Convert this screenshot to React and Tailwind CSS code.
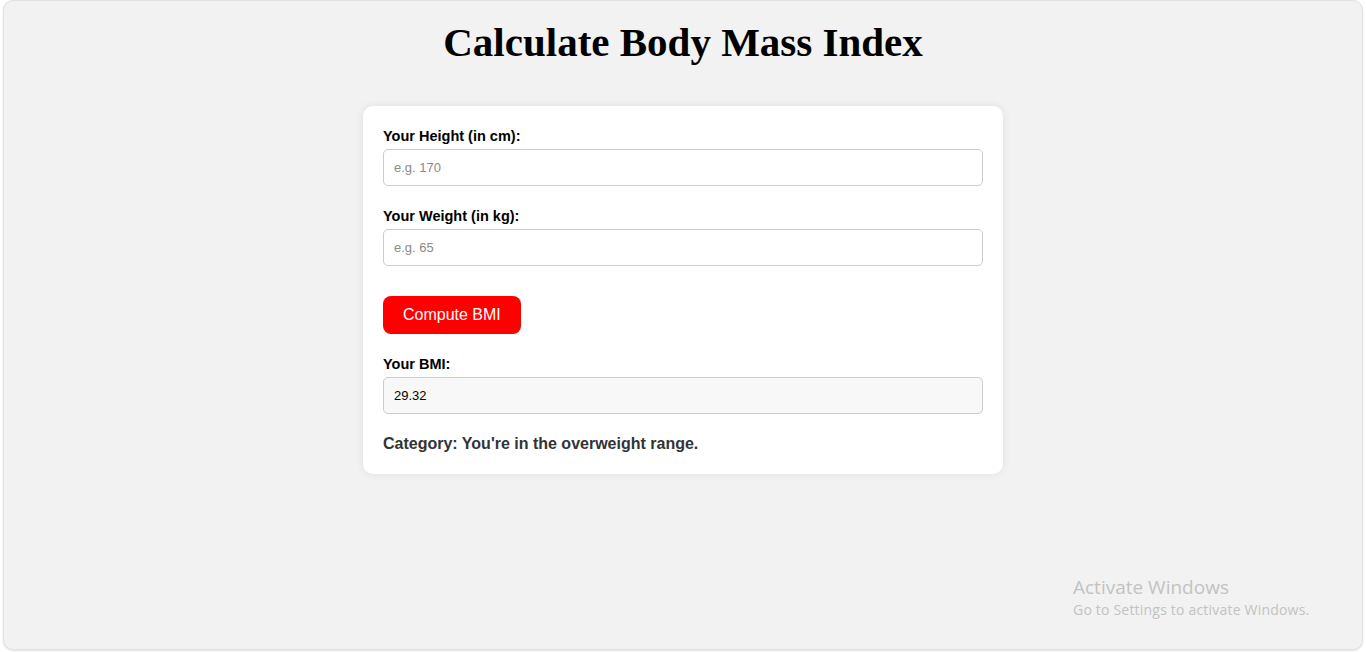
import React, { useState } from 'react';

const labelFont = { fontFamily: '"Liberation Sans", Arial, sans-serif' };

const App = () => {
  const [height, setHeight] = useState('');
  const [weight, setWeight] = useState('');
  const [bmi, setBmi] = useState('29.32');
  const [category, setCategory] = useState("You're in the overweight range.");

  const computeBmi = () => {
    const h = parseFloat(height) / 100;
    const w = parseFloat(weight);
    if (!h || !w) return;
    const value = w / (h * h);
    setBmi(value.toFixed(2));
    if (value < 18.5) setCategory("You're in the underweight range.");
    else if (value < 25) setCategory("You're in the healthy weight range.");
    else if (value < 30) setCategory("You're in the overweight range.");
    else setCategory("You're in the obese range.");
  };

  return (
    <div className="w-full h-[652px] bg-white font-['Liberation_Sans',Arial,sans-serif]">
      <div className="relative mx-[3px] h-[650px] rounded-[10px] bg-[#f2f2f2] border border-[#e2e2e2] shadow-[0_1px_2px_rgba(0,0,0,0.12)] flex flex-col items-center">
        <h1 className="mt-[16px] text-[41px] leading-[50px] font-bold text-black font-['Liberation_Serif','DejaVu_Serif',serif]">
          Calculate Body Mass Index
        </h1>

        <div className="mt-[39px] w-[640px] bg-white rounded-[10px] shadow-[0_0_10px_rgba(0,0,0,0.08)] px-5 pt-[20px] pb-[20px]">
          <label className="block text-[14.5px] leading-[21px] font-bold text-black mb-[2px]" style={labelFont}>
            Your Height (in cm):
          </label>
          <input
            type="number"
            value={height}
            onChange={(e) => setHeight(e.target.value)}
            placeholder="e.g. 170"
            className="block w-full h-[37px] px-[10px] text-[13px] border border-[#cccccc] rounded-[5px] placeholder:text-[#8a8a8a] outline-none"
          />

          <label className="block mt-[20px] text-[14.5px] leading-[21px] font-bold text-black mb-[2px]" style={labelFont}>
            Your Weight (in kg):
          </label>
          <input
            type="number"
            value={weight}
            onChange={(e) => setWeight(e.target.value)}
            placeholder="e.g. 65"
            className="block w-full h-[37px] px-[10px] text-[13px] border border-[#cccccc] rounded-[5px] placeholder:text-[#8a8a8a] outline-none"
          />

          <button
            onClick={computeBmi}
            className="mt-[30px] h-[38px] px-[20px] bg-[#ff0000] text-white text-[16px] rounded-[8px]"
          >
            Compute BMI
          </button>

          <label className="block mt-[20px] text-[14.5px] leading-[21px] font-bold text-black mb-[2px]" style={labelFont}>
            Your BMI:
          </label>
          <input
            type="text"
            readOnly
            value={bmi}
            className="block w-full h-[37px] px-[10px] text-[13px] text-black bg-[#f8f8f8] border border-[#cccccc] rounded-[5px] outline-none"
          />

          <p className="mt-[20px] text-[16px] leading-[20px] font-bold text-[#333333]">
            Category: {category}
          </p>
        </div>

        <div className="absolute left-[1069px] top-[574px] text-[#c2c2c2] font-['Open_Sans',sans-serif]">
          <div className="text-[19px] leading-[25px]">Activate Windows</div>
          <div className="text-[14px] leading-[20px] tracking-[0.2px]">Go to Settings to activate Windows.</div>
        </div>
      </div>
    </div>
  );
};

export default App;
